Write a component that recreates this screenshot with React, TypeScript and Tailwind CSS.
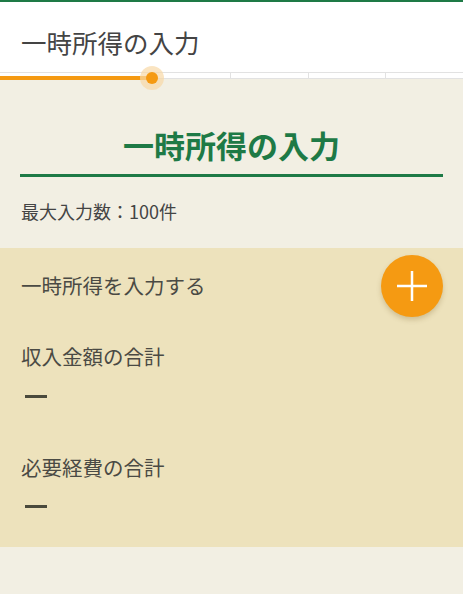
import React from "react";

const font = { fontFamily: '"Noto Sans CJK JP", "Noto Sans", sans-serif' };

export default function App() {
  return (
    <div className="w-[463px] h-[594px] bg-[#f2efe3] flex flex-col overflow-hidden" style={font}>
      {/* header */}
      <div className="border-t-2 border-[#1e7a46] bg-white h-[72px] flex items-center pl-[21px] pt-[10px]">
        <span className="text-[25.5px] leading-none text-[#444]">一時所得の入力</span>
      </div>
      {/* stepper track */}
      <div className="relative h-[7px] bg-white border-y border-[#e2e2e2] grid grid-cols-6">
        <div />
        <div />
        <div className="border-r border-[#e2e2e2]" />
        <div className="border-r border-[#e2e2e2]" />
        <div className="border-r border-[#e2e2e2]" />
        <div />
        <div className="absolute left-0 top-[3px] h-[4px] w-[152px] bg-[#f59a12]" />
        <div className="absolute left-[140px] top-[-7px] w-[24px] h-[24px] rounded-full bg-[#f8d9a6]/70 flex items-center justify-center">
          <div className="w-[12px] h-[12px] rounded-full bg-[#f59a12]" />
        </div>
      </div>

      {/* title */}
      <div className="px-[20px] pt-[50px]">
        <div className="text-center text-[31px] leading-none font-bold text-[#1e7a46] pb-[14px] border-b-[3px] border-[#1e7a46]">
          一時所得の入力
        </div>
        <div className="pl-px pt-[25px] text-[18px] leading-none text-[#444]">最大入力数：100件</div>
      </div>

      {/* beige section */}
      <div className="mt-[28px] bg-[#ede2bc] h-[299px] flex flex-col px-[21px]">
        <div className="flex items-center justify-between h-[75px]">
          <span className="text-[20.5px] leading-none text-[#4a4a44]">一時所得を入力する</span>
          <div className="w-[62px] h-[62px] rounded-full bg-[#f59a12] shadow-[0_3px_5px_rgba(120,90,30,0.25)] mr-[-1px] flex items-center justify-center">
            <svg width="32" height="32" viewBox="0 0 32 32">
              <path d="M16 1v30M1 16h30" stroke="#fff" strokeWidth="2.5" />
            </svg>
          </div>
        </div>
        <div className="pt-[23px] text-[20.5px] leading-none text-[#4a4a44]">収入金額の合計</div>
        <div className="pt-[28px] pl-[4px]">
          <div className="w-[22px] h-[3px] bg-[#4a4a3c]" />
        </div>
        <div className="pt-[59px] text-[20.5px] leading-none text-[#4a4a44]">必要経費の合計</div>
        <div className="pt-[28px] pl-[4px]">
          <div className="w-[22px] h-[3px] bg-[#4a4a3c]" />
        </div>
      </div>
    </div>
  );
}
